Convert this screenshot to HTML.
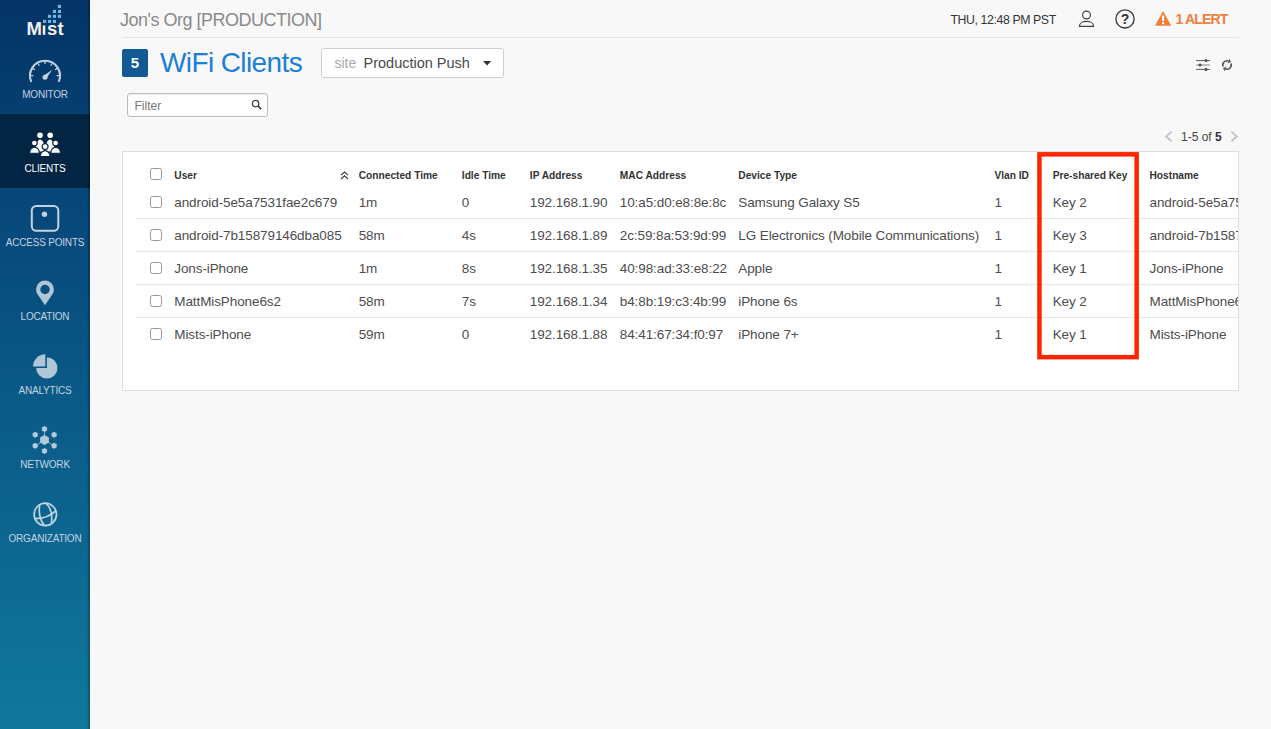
<!DOCTYPE html>
<html><head><meta charset="utf-8">
<style>
*{box-sizing:border-box;margin:0;padding:0}
html,body{width:1271px;height:729px;overflow:hidden;background:#f8f8f8;font-family:"Liberation Sans",sans-serif;position:relative}
.a{position:absolute;white-space:nowrap;line-height:1}
#sb{position:absolute;left:0;top:0;width:90px;height:729px;background:linear-gradient(180deg,#043466 0%,#07487a 30%,#0a5a87 55%,#10789b 100%)}
#sb .edge{position:absolute;right:0;top:0;width:3px;height:729px;background:linear-gradient(90deg,rgba(0,0,0,0),rgba(0,0,0,.35))}
#sb .act{position:absolute;left:0;top:114px;width:90px;height:74px;background:#022544}
.lbl{position:absolute;left:0;width:90px;text-align:center;font-size:10px;letter-spacing:-0.2px;color:#c3d3e2;line-height:1;white-space:nowrap}
.hd{font-size:10.2px;font-weight:700;color:#333}
.td{font-size:13.5px;color:#4d4d4d;letter-spacing:-0.1px}
.cb{position:absolute;width:12px;height:12px;border:1px solid #9a9a9a;border-radius:2.5px;background:#fff}
.sep{position:absolute;left:12px;width:1105px;height:1px;background:#e6e6e6}
</style></head><body>

<div id="sb">
  <div class="act"></div>
  <div class="edge"></div>
  <svg style="position:absolute;left:0;top:0" width="90" height="729" viewBox="0 0 90 729">
    <!-- logo -->
    <text x="26.6" y="34.8" font-family="Liberation Sans" font-weight="700" font-size="18.5" fill="#f2f2f2">M</text>
    <rect x="42.8" y="25.4" width="2.5" height="9.4" fill="#f2f2f2"/>
    <text x="47.1" y="34.8" font-family="Liberation Sans" font-weight="700" font-size="18.5" fill="#f2f2f2">st</text>
    <g fill="#6ab6ee">
      <rect x="57.9" y="4.9" width="3.1" height="3.1"/>
      <rect x="52.9" y="9.9" width="3.1" height="3.1"/><rect x="57.9" y="9.9" width="3.1" height="3.1"/>
      <rect x="48" y="14.8" width="3.1" height="3.1"/><rect x="52.9" y="14.8" width="3.1" height="3.1"/><rect x="57.9" y="14.8" width="3.1" height="3.1"/>
      <rect x="43" y="19.9" width="3.1" height="3.1"/><rect x="48" y="19.9" width="3.1" height="3.1"/><rect x="52.9" y="19.9" width="3.1" height="3.1"/>
    </g>
    <!-- monitor gauge -->
    <g stroke="#c3d2df" fill="none">
      <path d="M31.3 81.9 A15 15 0 1 1 58.7 81.9" stroke-width="2.1"/>
      <path d="M33.40 75.60L31.00 75.60 M34.95 69.80L32.88 68.60 M39.20 65.55L38.00 63.48 M45.00 64.00L45.00 61.60 M50.80 65.55L52.00 63.48 M55.05 69.80L57.12 68.60 M56.60 75.60L59.00 75.60" stroke-width="1.3"/>
    </g>
    <g fill="#c3d2df"><circle cx="45" cy="77.2" r="2.5"/><path d="M43.5 75.8L52 70 L46.4 78.6Z"/></g>
    <!-- clients -->
    <g fill="#fff" stroke="#022544" stroke-width="1.1">
      <circle cx="40" cy="135.3" r="2.8" stroke="none"/>
      <circle cx="50.2" cy="135.3" r="2.8" stroke="none"/>
      <path d="M35.4 151.5 A4.8 12 0 0 1 45 151.5Z" stroke="none"/>
      <path d="M45.2 151.5 A4.8 12 0 0 1 54.8 151.5Z" stroke="none"/>
      <circle cx="34.4" cy="143" r="2.9"/>
      <circle cx="55.6" cy="143" r="2.9"/>
      <path d="M29.6 153.2 A4.8 6 0 0 1 39.4 153.2Z"/>
      <path d="M50.8 153.2 A4.8 6 0 0 1 60.6 153.2Z"/>
      <circle cx="45.1" cy="146.6" r="3"/>
      <path d="M40.2 156.6 A4.9 6 0 0 1 50 156.6Z"/>
    </g>
    <!-- access points -->
    <rect x="31.8" y="205.9" width="26.5" height="24.9" rx="4.5" fill="none" stroke="#c3d2df" stroke-width="2"/>
    <circle cx="44.5" cy="214.3" r="2.7" fill="#c3d2df"/>
    <!-- location -->
    <path fill="#afc6d6" fill-rule="evenodd" d="M45 305.2 L37.7 294.6 A8.9 8.9 0 1 1 52.3 294.6 Z M49.7 289.5 A4.7 4.7 0 1 0 40.3 289.5 A4.7 4.7 0 1 0 49.7 289.5Z"/>
    <!-- analytics -->
    <g fill="#afc6d6">
      <path d="M46.9 368 L46.9 357.4 A10.6 10.6 0 1 1 36.3 368 Z"/>
      <path d="M45.3 366.6 L33 366.6 A12.3 12.3 0 0 1 45.3 354.3 Z"/>
    </g>
    <!-- network -->
    <g fill="#b4cad9">
      <path d="M44.5 434.9 L48.9 437.4 L48.9 442.6 L44.5 445.1 L40.1 442.6 L40.1 437.4Z"/>
      <path d="M44.50 426.00 L41.90 427.50 L41.90 430.50 L44.50 432.00 L47.10 430.50 L47.10 427.50Z"/><path d="M44.50 448.00 L41.90 449.50 L41.90 452.50 L44.50 454.00 L47.10 452.50 L47.10 449.50Z"/><path d="M35.20 431.80 L32.60 433.30 L32.60 436.30 L35.20 437.80 L37.80 436.30 L37.80 433.30Z"/><path d="M54.10 431.80 L51.50 433.30 L51.50 436.30 L54.10 437.80 L56.70 436.30 L56.70 433.30Z"/><path d="M35.20 442.70 L32.60 444.20 L32.60 447.20 L35.20 448.70 L37.80 447.20 L37.80 444.20Z"/><path d="M54.10 442.70 L51.50 444.20 L51.50 447.20 L54.10 448.70 L56.70 447.20 L56.70 444.20Z"/>
      <path d="M44.5 440 V431 M44.5 440 L37.5 444.5 M44.5 440 L51.8 444.5" stroke="#b4cad9" stroke-width="0.7"/>
    </g>
    <!-- globe -->
    <g fill="none" stroke="#bdd3e0" stroke-width="1.7">
      <circle cx="45.3" cy="514.4" r="11.2"/>
      <path d="M39.6 505 C38.6 512 39.8 521 44.8 525.6"/>
      <path d="M46 503.6 C50.5 507 52.6 514 51.4 523.8"/>
      <path d="M34.2 518.6 C41 518.8 50 516.5 56 510.6"/>
    </g>
  </svg>
  <div class="lbl" style="top:90px">MONITOR</div>
  <div class="lbl" style="top:164px;color:#fff">CLIENTS</div>
  <div class="lbl" style="top:238px">ACCESS POINTS</div>
  <div class="lbl" style="top:312px">LOCATION</div>
  <div class="lbl" style="top:386px">ANALYTICS</div>
  <div class="lbl" style="top:460px">NETWORK</div>
  <div class="lbl" style="top:534px">ORGANIZATION</div>
</div>

<!-- header -->
<div class="a" style="left:120px;top:10.6px;font-size:18px;color:#8a8a8a;letter-spacing:-0.5px">Jon's Org [PRODUCTION]</div>
<div style="position:absolute;left:122px;top:37px;width:1117px;height:1px;background:#e3e6e9"></div>
<div class="a" style="left:950.5px;top:13.5px;font-size:12.3px;color:#333;letter-spacing:-0.4px">THU, 12:48 PM PST</div>
<div class="a" style="left:1175.5px;top:12.2px;font-size:14px;font-weight:700;color:#f07f3c;letter-spacing:-0.85px">1 ALERT</div>

<!-- title -->
<div style="position:absolute;left:122px;top:49px;width:26px;height:28px;background:#135a94;border-radius:2px"></div>
<div class="a" style="left:122px;top:55px;width:26px;text-align:center;font-size:15px;font-weight:700;color:#fff">5</div>
<div class="a" style="left:160px;top:49px;font-size:28px;color:#1b7fd6;letter-spacing:-0.6px">WiFi Clients</div>

<div style="position:absolute;left:321px;top:48px;width:183px;height:30px;background:#fff;border:1px solid #cfcfcf;border-radius:3px"></div>
<div class="a" style="left:334.5px;top:56.4px;font-size:14px;color:#aaa">site</div>
<div class="a" style="left:363.5px;top:56px;font-size:14.5px;color:#4a4a4a">Production Push</div>

<!-- filter -->
<div style="position:absolute;left:127px;top:93px;width:141px;height:24px;background:#fff;border:1px solid #bbb;border-radius:3px;box-shadow:inset 0 1px 2px rgba(0,0,0,.08)"></div>
<div class="a" style="left:134.5px;top:99.8px;font-size:12px;color:#777">Filter</div>

<!-- pagination -->
<div class="a" style="left:1181px;top:130.8px;font-size:12px;color:#444">1-5 of <b style="color:#333">5</b></div>

<!-- card -->
<div id="card" style="position:absolute;left:122px;top:151px;width:1117px;height:240px;background:#fff;border:1px solid #dedede;overflow:hidden">
<!--T-->
<div class="cb" style="left:27px;top:16px"></div>
<div class="a hd" style="left:51.3px;top:18.87px">User</div>
<div class="a hd" style="left:235.7px;top:18.87px">Connected Time</div>
<div class="a hd" style="left:338.8px;top:18.87px">Idle Time</div>
<div class="a hd" style="left:406.8px;top:18.87px">IP Address</div>
<div class="a hd" style="left:496.8px;top:18.87px">MAC Address</div>
<div class="a hd" style="left:615.3px;top:18.87px">Device Type</div>
<div class="a hd" style="left:871.4px;top:18.87px">Vlan ID</div>
<div class="a hd" style="left:929.7px;top:18.87px">Pre-shared Key</div>
<div class="a hd" style="left:1026.5px;top:18.87px">Hostname</div>
<svg style="position:absolute;left:217px;top:19px" width="9" height="9" viewBox="0 0 9 9"><path d="M1 4.2L4.5 1L8 4.2M1 8L4.5 4.8L8 8" fill="none" stroke="#3a3a3a" stroke-width="1.1"/></svg>
<div class="cb" style="left:27px;top:44px"></div>
<div class="a td" style="left:51.3px;top:43.97px">android-5e5a7531fae2c679</div>
<div class="a td" style="left:235.7px;top:43.97px">1m</div>
<div class="a td" style="left:338.8px;top:43.97px">0</div>
<div class="a td" style="left:406.8px;top:43.97px">192.168.1.90</div>
<div class="a td" style="left:496.8px;top:43.97px">10:a5:d0:e8:8e:8c</div>
<div class="a td" style="left:615.3px;top:43.97px">Samsung Galaxy S5</div>
<div class="a td" style="left:871.4px;top:43.97px">1</div>
<div class="a td" style="left:929.7px;top:43.97px">Key 2</div>
<div class="a td" style="left:1026.5px;top:43.97px">android-5e5a7531fae2c679</div>
<div class="sep" style="top:66px"></div>
<div class="cb" style="left:27px;top:77px"></div>
<div class="a td" style="left:51.3px;top:76.97px">android-7b15879146dba085</div>
<div class="a td" style="left:235.7px;top:76.97px">58m</div>
<div class="a td" style="left:338.8px;top:76.97px">4s</div>
<div class="a td" style="left:406.8px;top:76.97px">192.168.1.89</div>
<div class="a td" style="left:496.8px;top:76.97px">2c:59:8a:53:9d:99</div>
<div class="a td" style="left:615.3px;top:76.97px">LG Electronics (Mobile Communications)</div>
<div class="a td" style="left:871.4px;top:76.97px">1</div>
<div class="a td" style="left:929.7px;top:76.97px">Key 3</div>
<div class="a td" style="left:1026.5px;top:76.97px">android-7b15879146dba085</div>
<div class="sep" style="top:99px"></div>
<div class="cb" style="left:27px;top:110px"></div>
<div class="a td" style="left:51.3px;top:109.97px">Jons-iPhone</div>
<div class="a td" style="left:235.7px;top:109.97px">1m</div>
<div class="a td" style="left:338.8px;top:109.97px">8s</div>
<div class="a td" style="left:406.8px;top:109.97px">192.168.1.35</div>
<div class="a td" style="left:496.8px;top:109.97px">40:98:ad:33:e8:22</div>
<div class="a td" style="left:615.3px;top:109.97px">Apple</div>
<div class="a td" style="left:871.4px;top:109.97px">1</div>
<div class="a td" style="left:929.7px;top:109.97px">Key 1</div>
<div class="a td" style="left:1026.5px;top:109.97px">Jons-iPhone</div>
<div class="sep" style="top:132px"></div>
<div class="cb" style="left:27px;top:143px"></div>
<div class="a td" style="left:51.3px;top:142.97px">MattMisPhone6s2</div>
<div class="a td" style="left:235.7px;top:142.97px">58m</div>
<div class="a td" style="left:338.8px;top:142.97px">7s</div>
<div class="a td" style="left:406.8px;top:142.97px">192.168.1.34</div>
<div class="a td" style="left:496.8px;top:142.97px">b4:8b:19:c3:4b:99</div>
<div class="a td" style="left:615.3px;top:142.97px">iPhone 6s</div>
<div class="a td" style="left:871.4px;top:142.97px">1</div>
<div class="a td" style="left:929.7px;top:142.97px">Key 2</div>
<div class="a td" style="left:1026.5px;top:142.97px">MattMisPhone6s2</div>
<div class="sep" style="top:165px"></div>
<div class="cb" style="left:27px;top:176px"></div>
<div class="a td" style="left:51.3px;top:175.97px">Mists-iPhone</div>
<div class="a td" style="left:235.7px;top:175.97px">59m</div>
<div class="a td" style="left:338.8px;top:175.97px">0</div>
<div class="a td" style="left:406.8px;top:175.97px">192.168.1.88</div>
<div class="a td" style="left:496.8px;top:175.97px">84:41:67:34:f0:97</div>
<div class="a td" style="left:615.3px;top:175.97px">iPhone 7+</div>
<div class="a td" style="left:871.4px;top:175.97px">1</div>
<div class="a td" style="left:929.7px;top:175.97px">Key 1</div>
<div class="a td" style="left:1026.5px;top:175.97px">Mists-iPhone</div>
<!--/T-->
</div>


<!-- header icons -->
<svg style="position:absolute;left:0;top:0;pointer-events:none" width="1271" height="729" viewBox="0 0 1271 729">
  <g fill="none" stroke="#444" stroke-width="1.2">
    <circle cx="1086.5" cy="15" r="3.9"/>
    <path d="M1079.4 26.3 C1079.4 19.8 1093.6 19.8 1093.6 26.3 Z"/>
    <circle cx="1125" cy="18.9" r="9.1" stroke="#333" stroke-width="1.3"/>
  </g>
  <text x="1125" y="24" text-anchor="middle" font-family="Liberation Sans" font-weight="700" font-size="14" fill="#333">?</text>
  <path d="M1163.1 11 L1171.2 25.8 L1155 25.8Z" fill="#f07f3c"/>
  <rect x="1162.1" y="15.5" width="2" height="5.5" fill="#fff"/>
  <rect x="1162.1" y="22.2" width="2" height="2" fill="#fff"/>
  <!-- caret -->
  <path d="M483 61 L491.2 61 L487.1 65.5Z" fill="#333"/>
  <!-- search -->
  <circle cx="255.6" cy="103.6" r="3.2" fill="none" stroke="#444" stroke-width="1.3"/>
  <path d="M257.9 105.9 L261.2 109.2" stroke="#444" stroke-width="1.8"/>
  <!-- toolbar -->
  <g stroke="#555" stroke-width="1">
    <path d="M1196.1 60.6H1209.9 M1196.1 69.4H1209.9"/>
    <path d="M1196.1 65H1209.9" stroke="#aaa" stroke-width="1.5"/>
  </g>
  <g fill="#555"><circle cx="1206" cy="60.6" r="1.6"/><circle cx="1200" cy="65" r="1.6"/><circle cx="1206" cy="69.4" r="1.6"/></g>
  <g fill="none" stroke="#555" stroke-width="1.7">
    <path d="M1223.05 66.44 A4.2 4.2 0 0 1 1228.44 61.05"/>
    <path d="M1230.95 63.56 A4.2 4.2 0 0 1 1225.56 68.95"/>
  </g>
  <path d="M1229.26 58.79 L1231.07 62.0 L1227.62 63.31Z" fill="#555"/>
  <path d="M1224.74 71.21 L1222.93 68.0 L1226.38 66.69Z" fill="#555"/>
  <!-- pagination chevrons -->
  <path d="M1171.6 131.6 L1166.2 136.4 L1171.6 141.2" fill="none" stroke="#c4c4c4" stroke-width="1.9"/>
  <path d="M1231.4 131.6 L1236.8 136.4 L1231.4 141.2" fill="none" stroke="#c4c4c4" stroke-width="1.9"/>
  <!-- red box -->
  <rect x="1039.45" y="154.35" width="97.2" height="202.8" fill="none" stroke="#fd2400" stroke-width="4.5"/>
</svg>
</body></html>
